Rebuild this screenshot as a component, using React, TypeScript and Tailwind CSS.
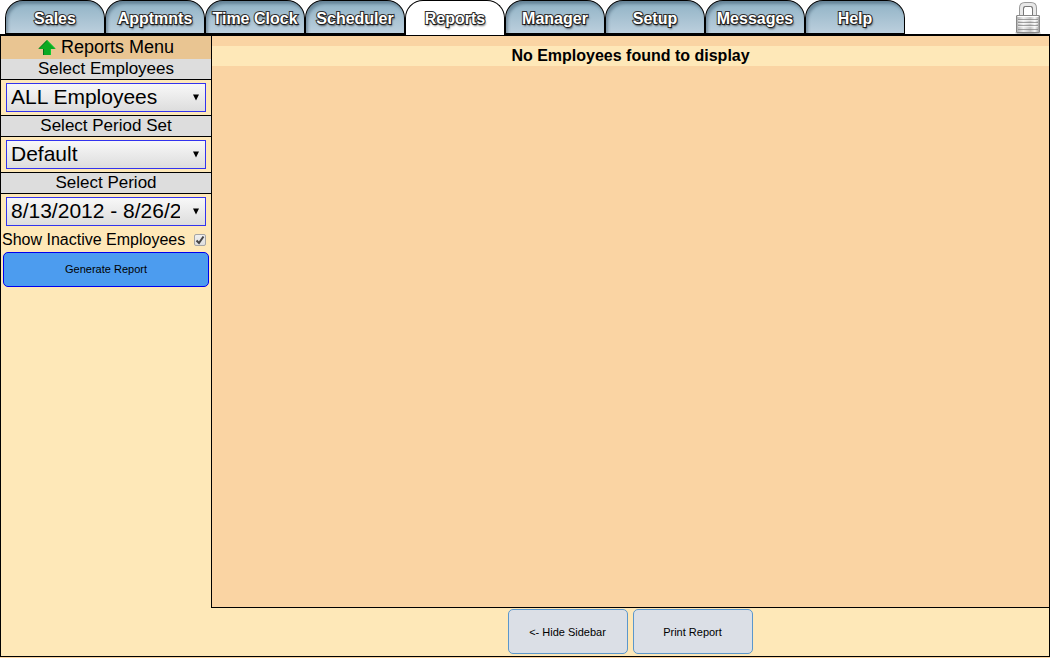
import { useState, type ReactNode } from "react";

const tabs = [
  "Sales",
  "Apptmnts",
  "Time Clock",
  "Scheduler",
  "Reports",
  "Manager",
  "Setup",
  "Messages",
  "Help",
];

function Tab({ label, active }: { label: string; active: boolean }) {
  const look = active
    ? "border-x border-t bg-white pt-[2px]"
    : "border-x border-t border-b-2 bg-linear-to-b from-[#8fb2c5] to-[#bccfdd] pt-[4px] shadow-[inset_2px_3px_3px_rgba(50,75,95,0.45)]";
  return (
    <a
      href="#"
      aria-current={active ? "page" : undefined}
      className={`flex h-[35px] w-[100px] shrink-0 items-center justify-center rounded-t-[18px] border-black text-[16px] leading-none font-bold whitespace-nowrap text-white [paint-order:stroke_fill] [-webkit-text-stroke:2px_#303030] [text-shadow:1px_2px_2px_rgba(0,0,0,0.6)] ${look}`}
    >
      {label}
    </a>
  );
}

function LockIcon() {
  return (
    <svg width="26" height="32" viewBox="0 0 26 32" aria-hidden="true">
      <defs>
        <linearGradient id="lock-body" x1="0" x2="1" y1="0" y2="0">
          <stop offset="0" stopColor="#b0b0b0" />
          <stop offset="0.3" stopColor="#efefef" />
          <stop offset="0.6" stopColor="#c4c4c4" />
          <stop offset="0.8" stopColor="#f8f8f8" />
          <stop offset="1" stopColor="#999" />
        </linearGradient>
      </defs>
      <path d="M6.5 14V6Q6.5 2.5 10 2.5H16Q19.5 2.5 19.5 6V14" fill="none" stroke="#999" strokeWidth="5" />
      <path d="M6.5 14V6Q6.5 2.5 10 2.5H16Q19.5 2.5 19.5 6V14" fill="none" stroke="#e8e8e8" strokeWidth="3" />
      <path d="M8.5 14V7Q8.5 4.5 10.5 4.5H15.5Q17.5 4.5 17.5 7V14" fill="none" stroke="#777" />
      <ellipse cx="13" cy="31" rx="13" ry="1" fill="#777" opacity="0.6" />
      <rect x="1.5" y="13.5" width="23" height="17" rx="0.5" fill="url(#lock-body)" stroke="#888" />
      <path d="M2.5 14.5H23.5" stroke="#fff" />
      <path d="M3 17.5H23M3 20.5H23M3 23.5H23M3 27.5H23" stroke="#888" opacity="0.75" />
      <path d="M3 18.5H23M3 21.5H23M3 24.5H23" stroke="#fff" opacity="0.6" />
    </svg>
  );
}

function UpArrow() {
  return (
    <svg width="18" height="16" viewBox="0 0 18 16" aria-hidden="true">
      <path d="M9 0L17.5 9H13V15H5V9H0.5Z" fill="#0caa22" />
      <path d="M9 0.5L1 8.5M5.5 9V15" fill="none" stroke="#06701a" />
      <path d="M9 0.5L17 8.5M12.5 9V15" fill="none" stroke="#10cc30" />
    </svg>
  );
}

function Field({ id, label, children }: { id: string; label: string; children: ReactNode }) {
  return (
    <div>
      <label
        htmlFor={id}
        className="block h-[21px] border-b border-black bg-[#dddddd] text-center text-[17px] leading-[19px]"
      >
        {label}
      </label>
      <div className="relative px-[5px] py-[3px]">
        <select
          id={id}
          className="block h-[29px] w-full appearance-none border border-[#3333ee] bg-linear-to-b from-[#f8f8f8] to-[#dddddd] pr-[25px] pb-px pl-1 text-[21px] leading-[26px]"
        >
          {children}
        </select>
        <svg
          className="pointer-events-none absolute top-[14px] right-[12px]"
          width="6"
          height="7"
          viewBox="0 0 6 7"
          aria-hidden="true"
        >
          <path d="M0 0.5H6L3 6.5Z" fill="#000" />
        </svg>
      </div>
    </div>
  );
}

function FooterButton({ children }: { children: ReactNode }) {
  return (
    <button
      type="button"
      className="h-[45px] w-[120px] rounded-[5px] border border-[#5b97cc] bg-[#dbdfe6] pt-[2px] text-[11px]"
    >
      {children}
    </button>
  );
}

export default function App() {
  const [showInactive, setShowInactive] = useState(true);

  return (
    <div className="flex min-h-screen flex-col bg-[#fad4a3] pb-px font-['Liberation_Sans',Arial,sans-serif] text-black">
      <header className="flex justify-between bg-white pr-[9px] pl-[5px] shadow-[inset_0_-1px_#000]">
        <nav className="flex">
          {tabs.map((label) => (
            <Tab key={label} label={label} active={label === "Reports"} />
          ))}
        </nav>
        <button type="button" aria-label="Lock" className="mt-[2px] self-start">
          <LockIcon />
        </button>
      </header>

      <div className="flex flex-1 border border-black bg-[#fee8b8]">
        <aside className="w-[210px] shrink-0">
          <h1 className="flex h-[23px] items-center justify-center gap-[5px] bg-[#e9c592] text-[18px] leading-[23px]">
            <UpArrow />
            Reports Menu
          </h1>
          <div className="divide-y divide-black">
            <Field id="employees" label="Select Employees">
              <option>ALL Employees</option>
            </Field>
            <Field id="period-set" label="Select Period Set">
              <option>Default</option>
            </Field>
            <Field id="period" label="Select Period">
              <option>8/13/2012 - 8/26/2012</option>
            </Field>
          </div>
          <div className="flex h-[23px] items-center justify-between pr-[5px] pb-[2px] pl-px">
            <label htmlFor="inactive" className="text-[16px] leading-[21px] whitespace-nowrap">
              Show Inactive Employees
            </label>
            <span className="relative block">
              <input
                id="inactive"
                type="checkbox"
                checked={showInactive}
                onChange={(event) => setShowInactive(event.target.checked)}
                className="block size-[12px] appearance-none rounded-[2px] border border-[#a5a5a5] bg-linear-to-b from-[#f0f0f0] to-[#dedede]"
              />
              {showInactive && (
                <svg
                  className="pointer-events-none absolute inset-0"
                  width="12"
                  height="12"
                  viewBox="0 0 12 12"
                  aria-hidden="true"
                >
                  <path d="M2.5 6.5L5 9L9.5 2.5" fill="none" stroke="#444" strokeWidth="2" />
                </svg>
              )}
            </span>
          </div>
          <div className="px-[2px]">
            <button
              type="button"
              className="h-[35px] w-full rounded-[5px] border border-[#0000ee] bg-[#4c9cef] text-[11px]"
            >
              Generate Report
            </button>
          </div>
        </aside>

        <div className="flex min-w-0 flex-1 flex-col">
          <main className="flex-1 border-b border-l border-black bg-[#fad4a3] pt-[10px]">
            <p className="h-[20px] bg-[#fee8b8] text-center text-[16px] leading-[20px] font-bold">
              No Employees found to display
            </p>
          </main>
          <footer className="flex justify-center gap-[5px] pt-px pb-[2px]">
            <FooterButton>&lt;- Hide Sidebar</FooterButton>
            <FooterButton>Print Report</FooterButton>
          </footer>
        </div>
      </div>
    </div>
  );
}
